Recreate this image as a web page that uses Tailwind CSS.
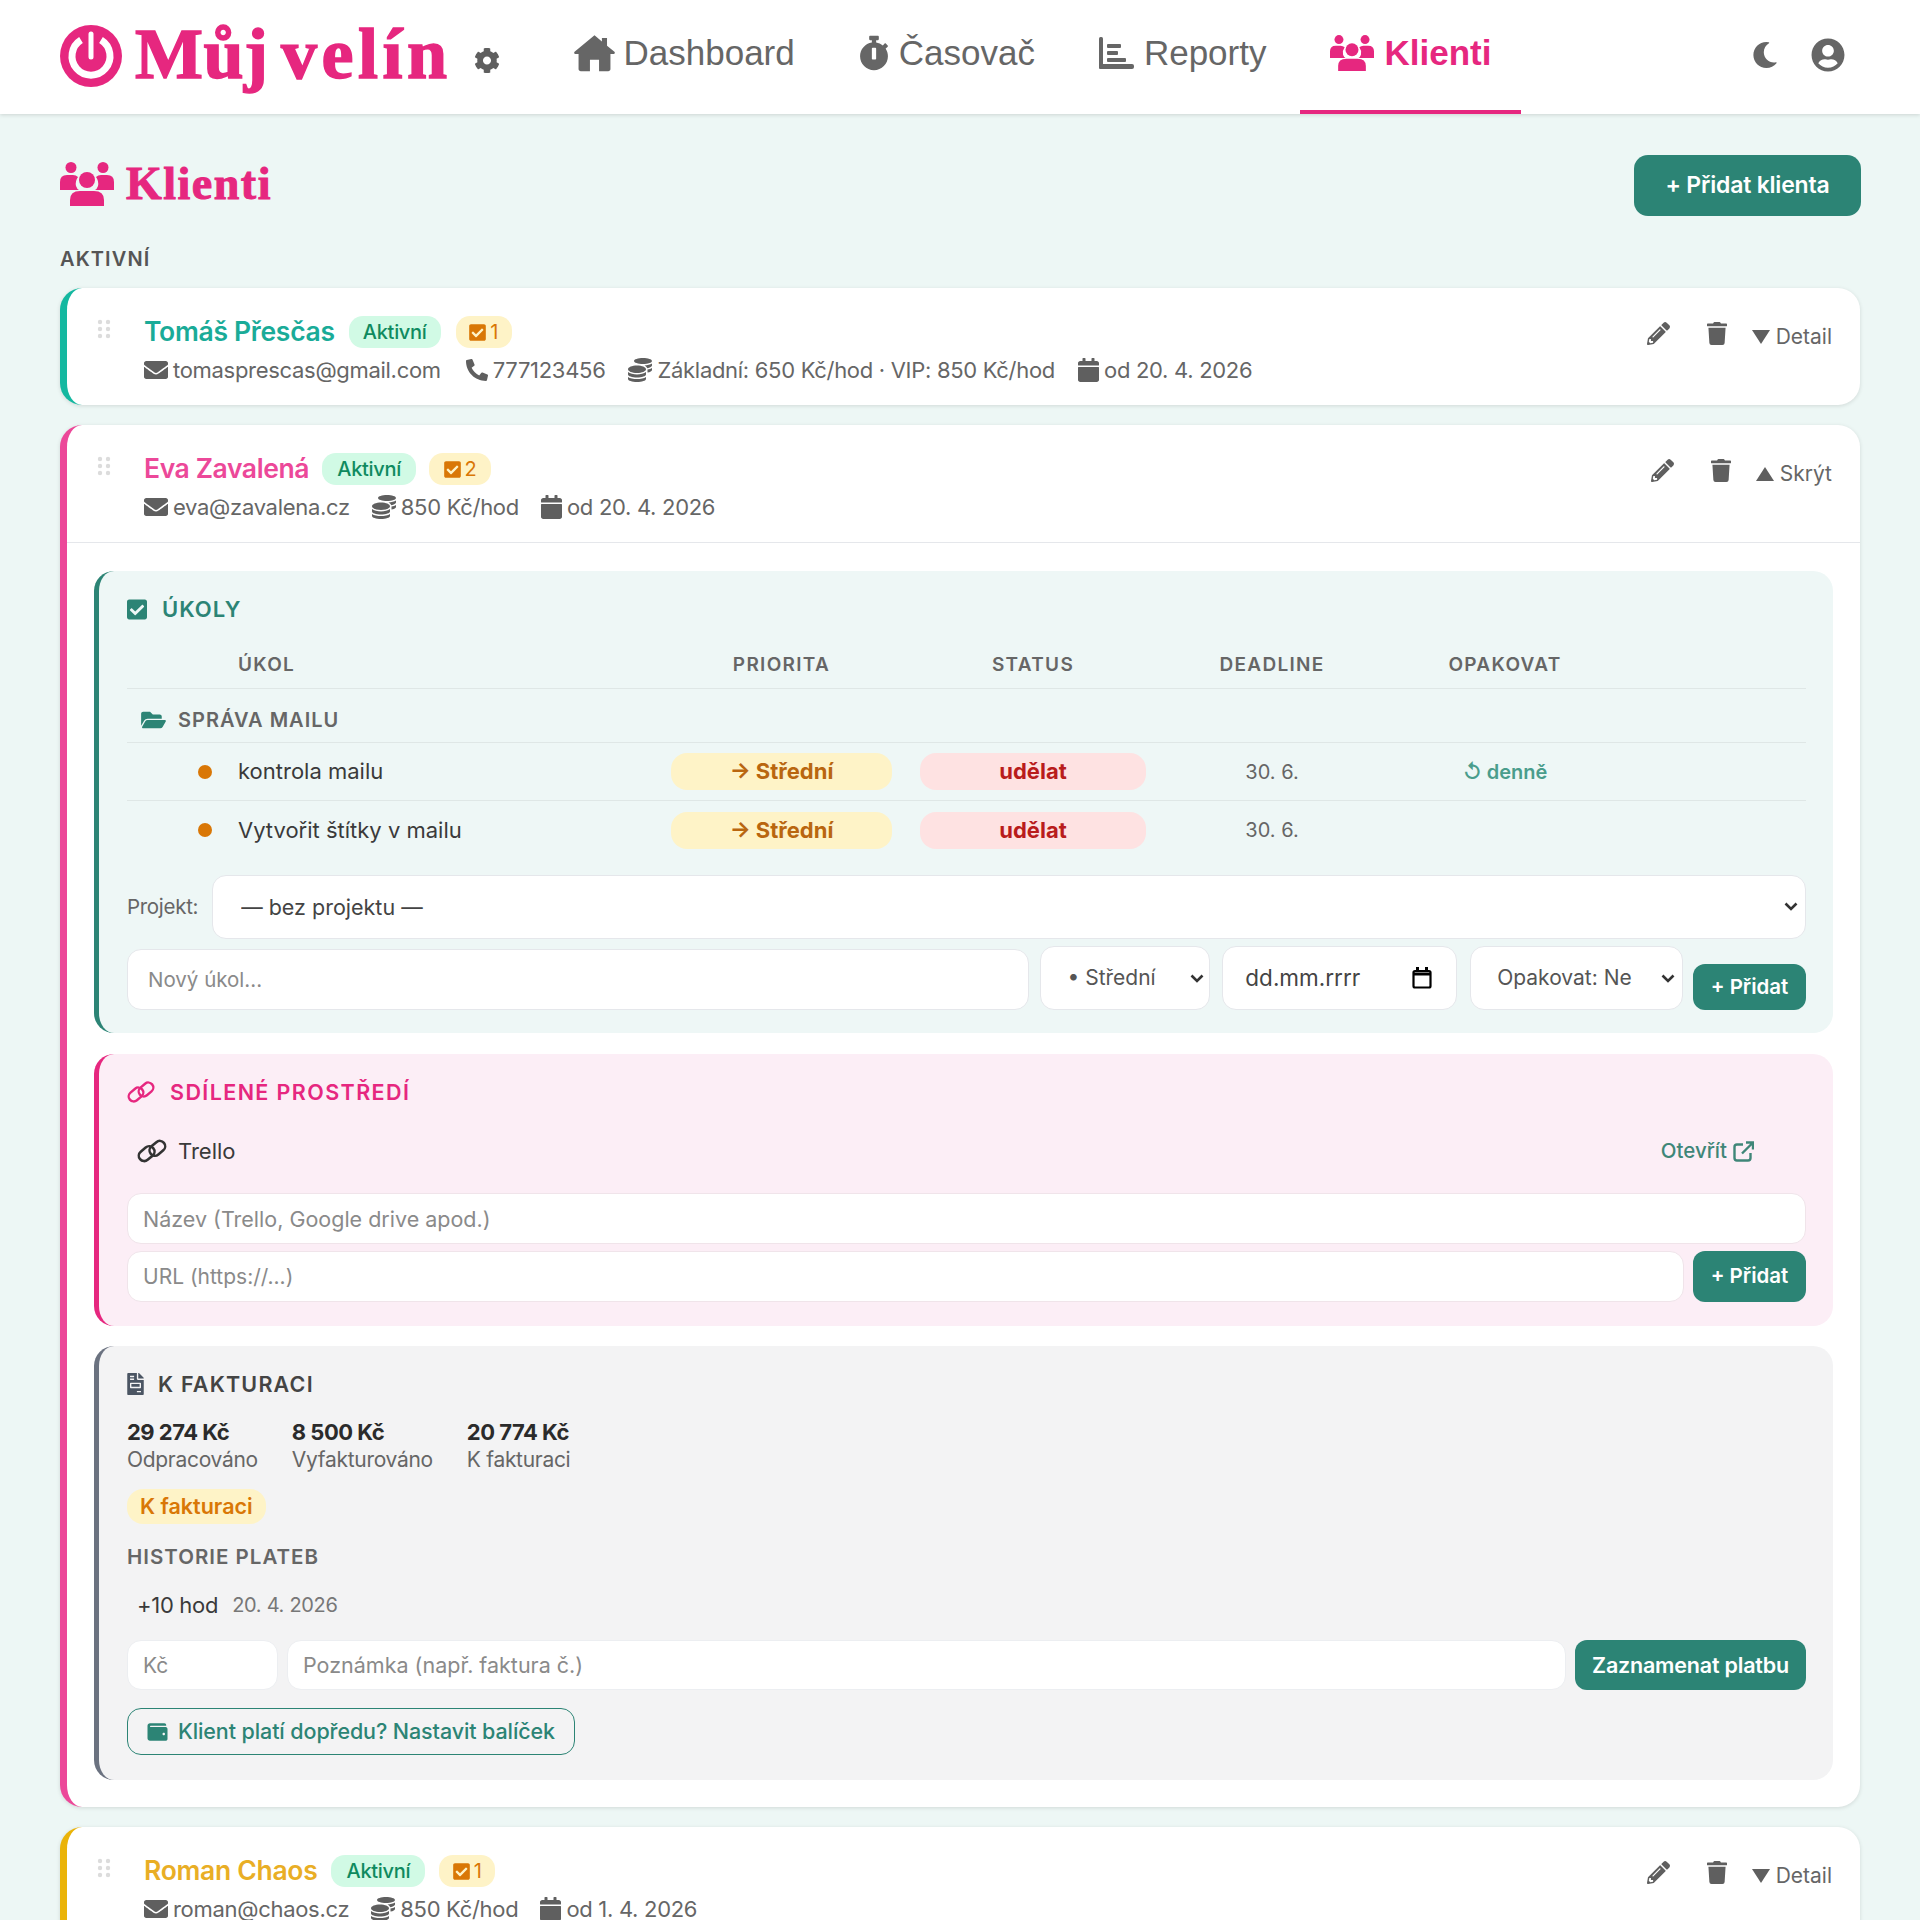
<!DOCTYPE html>
<html lang="cs">
<head>
  <meta charset="UTF-8" />
  <title>Můj velín – Klienti</title>
  <script src="https://cdn.jsdelivr.net/npm/@tailwindcss/browser@4"></script>
</head>
<body class="h-[1920px] overflow-hidden bg-[#edf7f5] text-[#2b2b2b] font-['Inter','Noto_Sans',sans-serif]">
  <!-- icon sprite -->
  <svg class="hidden">
    <symbol id="i-envelope" viewBox="0 0 512 512"><path d="M502.3 190.8c3.9-3.1 9.7-.2 9.7 4.7V400c0 26.5-21.5 48-48 48H48c-26.5 0-48-21.5-48-48V195.6c0-5 5.7-7.8 9.7-4.7 22.4 17.4 52.1 39.5 154.1 113.6 21.1 15.4 56.7 47.8 92.2 47.6 35.7.3 72-32.8 92.3-47.6 102-74.1 131.6-96.3 154-113.7zM256 320c23.2.4 56.6-29.2 73.4-41.4 132.7-96.3 142.8-104.7 173.4-128.7 5.8-4.5 9.2-11.5 9.2-18.9v-19c0-26.5-21.5-48-48-48H48C21.5 64 0 85.5 0 112v19c0 7.4 3.4 14.3 9.2 18.9 30.6 23.9 40.7 32.4 173.4 128.7 16.8 12.2 50.2 41.8 73.4 41.4z"/></symbol>
    <symbol id="i-phone" viewBox="0 0 512 512"><path d="M497.39 361.8l-112-48a24 24 0 0 0-28 6.9l-49.6 60.6A370.66 370.66 0 0 1 130.6 204.11l60.6-49.6a23.94 23.94 0 0 0 6.9-28l-48-112A24.16 24.16 0 0 0 122.6.61l-104 24A24 24 0 0 0 0 48c0 256.5 207.9 464 464 464a24 24 0 0 0 23.4-18.6l24-104a24.29 24.29 0 0 0-14.01-27.6z"/></symbol>
    <symbol id="i-coins" viewBox="0 0 512 512"><path d="M0 405.3V448c0 35.3 86 64 192 64s192-28.7 192-64v-42.7C342.7 434.4 267.2 448 192 448S41.3 434.4 0 405.3zM320 128c106 0 192-28.7 192-64S426 0 320 0 128 28.7 128 64s86 64 192 64zM0 300.4V352c0 35.3 86 64 192 64s192-28.7 192-64v-51.6c-41.3 34-116.9 51.6-192 51.6S41.3 334.4 0 300.4zm416 11c57.3-11.1 96-31.7 96-55.4v-42.7c-23.2 16.4-57.3 27.6-96 34.5v63.6zM192 160C86 160 0 195.8 0 240s86 80 192 80 192-35.8 192-80-86-80-192-80zm219.3 56.3c60-10.8 100.7-32 100.7-56.3v-42.7c-35.5 25.1-96.5 38.6-160.7 41.8 29.5 14.3 51.2 33.5 60 57.2z"/></symbol>
    <symbol id="i-calendar" viewBox="0 0 448 512"><path d="M12 192h424c6.6 0 12 5.4 12 12v260c0 26.5-21.5 48-48 48H48c-26.5 0-48-21.5-48-48V204c0-6.6 5.4-12 12-12zm436-44v-36c0-26.5-21.5-48-48-48h-48V12c0-6.6-5.4-12-12-12h-40c-6.6 0-12 5.4-12 12v52H160V12c0-6.6-5.4-12-12-12h-40c-6.6 0-12 5.4-12 12v52H48C21.5 64 0 85.5 0 112v36c0 6.6 5.4 12 12 12h424c6.6 0 12-5.4 12-12z"/></symbol>
    <symbol id="i-check" viewBox="0 0 448 512"><path d="M400 480H48c-26.51 0-48-21.49-48-48V80c0-26.51 21.49-48 48-48h352c26.51 0 48 21.49 48 48v352c0 26.51-21.49 48-48 48zm-204.686-98.059l184-184c6.248-6.248 6.248-16.379 0-22.627l-22.627-22.627c-6.248-6.248-16.379-6.249-22.628 0L184 302.745l-70.059-70.059c-6.248-6.248-16.379-6.248-22.628 0l-22.627 22.627c-6.248 6.248-6.248 16.379 0 22.627l104 104c6.249 6.25 16.379 6.25 22.628.001z"/></symbol>
    <symbol id="i-trash" viewBox="0 0 448 512"><path d="M432 32H312l-9.4-18.7A24 24 0 0 0 281.1 0H166.8a23.72 23.72 0 0 0-21.4 13.3L136 32H16A16 16 0 0 0 0 48v32a16 16 0 0 0 16 16h416a16 16 0 0 0 16-16V48a16 16 0 0 0-16-16zM53.2 467a48 48 0 0 0 47.9 45h245.8a48 48 0 0 0 47.9-45L416 128H32z"/></symbol>
    <symbol id="i-pencil" viewBox="0 0 512 512"><path d="M497.9 142.1l-46.1 46.1c-4.7 4.7-12.3 4.7-17 0l-111-111c-4.7-4.7-4.7-12.3 0-17l46.1-46.1c18.7-18.7 49.1-18.7 67.9 0l60.1 60.1c18.8 18.7 18.8 49.1 0 67.9zM284.2 99.8L21.6 362.4.4 483.9c-2.9 16.4 11.4 30.6 27.8 27.8l121.5-21.3 262.6-262.6c4.7-4.7 4.7-12.3 0-17l-111-111c-4.8-4.7-12.4-4.7-17.1 0zM124.1 339.9c-5.5-5.5-5.5-14.3 0-19.8l154-154c5.5-5.5 14.3-5.5 19.8 0s5.5 14.3 0 19.8l-154 154c-5.5 5.5-14.3 5.5-19.8 0zM88 424h48v36.3l-64.5 11.3-31.1-31.1L51.7 376H88v48z"/></symbol>
    <symbol id="i-users" viewBox="0 0 54 44"><circle cx="11" cy="5.500" r="5.500"/><circle cx="43" cy="5.500" r="5.500"/><circle cx="27" cy="18" r="8"/><path d="M0 28V20Q0 13 7 13H13Q16 13 18 15Q15 19 16 24Q17 27 19 28Z"/><path d="M54 28V20Q54 13 47 13H41Q38 13 36 15Q39 19 38 24Q37 27 35 28Z"/><path d="M10 44V38Q10 29 20 29H34Q44 29 44 38V44Z"/></symbol>
    <symbol id="i-link" viewBox="0 0 28 24"><rect x="1" y="9.500" width="16" height="10" rx="5" fill="none" stroke="currentColor" stroke-width="2.400" transform="rotate(-40 9 14.500)"/><rect x="11" y="4.500" width="16" height="10" rx="5" fill="none" stroke="currentColor" stroke-width="2.400" transform="rotate(-40 19 9.500)"/></symbol>
    <symbol id="i-chevron" viewBox="0 0 14 9"><path d="M1.500 1.500 7 7l5.500-5.500" fill="none" stroke="currentColor" stroke-width="2.600"/></symbol>
    <symbol id="i-grip" viewBox="0 0 14 20"><circle cx="3" cy="3" r="2.200"/><circle cx="11" cy="3" r="2.200"/><circle cx="3" cy="10" r="2.200"/><circle cx="11" cy="10" r="2.200"/><circle cx="3" cy="17" r="2.200"/><circle cx="11" cy="17" r="2.200"/></symbol>
  </svg>

  <!-- header -->
  <header class="h-[114px] bg-white shadow-[0_1px_4px_rgba(0,0,0,0.14)] px-[60px] flex items-stretch relative">
    <div class="flex items-center gap-[13px] text-[#e6277f]">
      <svg class="w-[62px] h-[62px] mt-[-3px]" viewBox="0 0 62 62">
        <circle cx="31" cy="31" r="31" fill="#e6277f"/>
        <path d="M21 15a19 19 0 1 0 20 0" fill="none" stroke="#fff" stroke-width="7"/>
        <path d="M31 8v24" stroke="#e6277f" stroke-width="13"/>
        <path d="M31 9v23" stroke="#fff" stroke-width="5" stroke-linecap="round"/>
      </svg>
      <span class="font-['Liberation_Serif',serif] font-bold text-[72px] leading-none tracking-[0.500px] [word-spacing:-6px] mt-[-6px] [-webkit-text-stroke:1.500px_#e6277f]">Můj <span class="tracking-[4.500px]">velín</span></span>
    </div>
    <svg class="w-[26px] h-[27px] fill-[#5f5f5f] ml-[22px] mt-[47px]" viewBox="0 0 512 512"><path d="M487.4 315.7l-42.6-24.6c4.3-23.2 4.3-47 0-70.2l42.6-24.6c4.9-2.8 7.1-8.6 5.5-14-11.1-35.6-30-67.8-54.7-94.6-3.8-4.1-10-5.1-14.8-2.3L380.8 110c-17.9-15.4-38.5-27.3-60.8-35.1V25.8c0-5.6-3.9-10.5-9.4-11.7-36.7-8.2-74.3-7.8-109.2 0-5.5 1.2-9.4 6.1-9.4 11.7V75c-22.2 7.9-42.8 19.8-60.8 35.1L88.7 85.5c-4.9-2.8-11-1.9-14.8 2.3-24.7 26.7-43.6 58.9-54.7 94.6-1.7 5.4.6 11.2 5.5 14L67.3 221c-4.3 23.2-4.3 47 0 70.2l-42.6 24.6c-4.9 2.8-7.1 8.6-5.5 14 11.1 35.6 30 67.8 54.7 94.6 3.8 4.1 10 5.1 14.8 2.3l42.6-24.6c17.9 15.4 38.5 27.3 60.8 35.1v49.2c0 5.6 3.9 10.5 9.4 11.7 36.7 8.2 74.3 7.8 109.2 0 5.5-1.2 9.4-6.1 9.4-11.7v-49.2c22.2-7.9 42.8-19.8 60.8-35.1l42.6 24.6c4.9 2.8 11 1.9 14.8-2.3 24.7-26.7 43.6-58.9 54.7-94.6 1.5-5.5-.7-11.3-5.6-14.1zM256 336c-44.1 0-80-35.9-80-80s35.9-80 80-80 80 35.9 80 80-35.9 80-80 80z"/></svg>
    <nav class="flex items-stretch gap-[4px] ml-[44px] font-['Liberation_Sans',sans-serif] text-[35px] text-[#666]">
      <a class="flex items-center gap-[9px] px-[30px] pb-[8px]">
        <svg class="w-[41px] h-[38px] fill-[#666]" viewBox="0 0 576 512"><path d="M288 8l104 86V44h72v110l104 86c12 10 4 30-12 30h-44v210c0 18-14 32-32 32H352V352H224v160H96c-18 0-32-14-32-32V270H20c-16 0-24-20-12-30z"/></svg>
        Dashboard</a>
      <a class="flex items-center gap-[10px] px-[30px] pb-[8px]">
        <svg class="w-[30px] h-[38px] fill-[#666]" viewBox="0 0 448 512"><path d="M432 304c0 114.9-93.1 208-208 208S16 418.9 16 304c0-104 76.3-190.2 176-205.5V64h-28c-6.6 0-12-5.4-12-12V12c0-6.6 5.4-12 12-12h120c6.6 0 12 5.4 12 12v40c0 6.6-5.4 12-12 12h-28v34.5c37.5 5.8 71.7 21.6 99.7 44.6l27.5-27.5c4.7-4.7 12.3-4.7 17 0l28.3 28.3c4.7 4.7 4.7 12.3 0 17l-29.4 29.4-.6.6C419.7 223.3 432 262.2 432 304zm-176 36V188.5c0-6.6-5.4-12-12-12h-40c-6.6 0-12 5.4-12 12V340c0 6.6 5.4 12 12 12h40c6.6 0 12-5.4 12-12z"/></svg>
        Časovač</a>
      <a class="flex items-center gap-[10px] px-[30px] pb-[8px]">
        <svg class="w-[35px] h-[32px] fill-[#666]" viewBox="0 0 35 32"><rect x="0" y="0" width="4" height="32" rx="1.500"/><rect x="0" y="27" width="35" height="5" rx="2"/><rect x="8" y="7" width="14" height="4" rx="1"/><rect x="8" y="14" width="11" height="4" rx="1"/><rect x="8" y="21" width="19" height="4" rx="1"/></svg>
        Reporty</a>
      <a class="flex items-center gap-[10px] px-[30px] pb-[8px] text-[#e6277f] font-bold border-b-[4px] border-[#e6277f] text-[35px] h-[114px] pt-[4px]">
        <svg class="w-[44px] h-[36px] fill-[#e6277f]"><use href="#i-users"/></svg>
        Klienti</a>
    </nav>
    <div class="ml-auto mr-[15px] flex items-center gap-[33px] pb-[4px]">
      <svg class="w-[26px] h-[32px] fill-[#666]" viewBox="0 0 512 512"><path d="M283.211 512c78.962 0 151.079-35.925 198.857-94.792 7.068-8.708-.639-21.43-11.562-19.35-124.203 23.654-238.262-71.576-238.262-196.954 0-72.222 38.662-138.635 101.498-174.394 9.686-5.512 7.25-20.197-3.756-22.23A258.156 258.156 0 0 0 283.211 0c-141.309 0-256 114.511-256 256 0 141.309 114.511 256 256 256z"/></svg>
      <svg class="w-[34px] h-[34px] fill-[#666]" viewBox="0 0 496 512"><path d="M248 8C111 8 0 119 0 256s111 248 248 248 248-111 248-248S385 8 248 8zm0 96c48.6 0 88 39.4 88 88s-39.4 88-88 88-88-39.4-88-88 39.4-88 88-88zm0 344c-58.7 0-111.3-26.6-146.5-68.2 18.8-35.4 55.6-59.8 98.5-59.8 2.4 0 4.8.4 7.1 1.1 13 4.2 26.6 6.9 40.9 6.9 14.3 0 28-2.7 40.9-6.9 2.3-.7 4.7-1.1 7.1-1.1 42.9 0 79.7 24.4 98.5 59.8C359.3 421.4 306.7 448 248 448z"/></svg>
    </div>
  </header>

  <main class="px-[60px] pt-[41px]">
    <div class="flex items-center justify-between">
      <h1 class="flex items-center gap-[12px] mb-[3px] text-[#e6277f] font-['Liberation_Serif',serif] font-bold text-[46px] leading-none tracking-[1.500px] [-webkit-text-stroke:1px_#e6277f]">
        <svg class="w-[54px] h-[44px] fill-[#e6277f]"><use href="#i-users"/></svg>
        Klienti
      </h1>
      <button class="h-[61px] w-[227px] mr-[-1px] rounded-[14px] bg-[#2c8475] text-white text-[23px] font-semibold tracking-[-0.2px]">+ Přidat klienta</button>
    </div>
    <div class="mt-[31px] text-[20px] leading-[24px] font-semibold tracking-[1.100px] text-[#555]">AKTIVNÍ</div>

    <!-- client 1 -->
    <section class="mt-[17px] h-[117px] bg-white rounded-[22px] border-l-[7px] border-[#14b8a0] shadow-[0_1px_4px_rgba(0,0,0,0.12)] flex pl-[30px] pr-[28px] pt-[28px]">
      <svg class="w-[14px] h-[20px] fill-[#dcdcdc] mt-[3px]"><use href="#i-grip"/></svg>
      <div class="ml-[33px]">
        <div class="flex items-center h-[32px]">
          <span class="text-[26.500px] font-semibold tracking-[-0.3px] text-[#1aab98]">Tomáš Přesčas</span>
          <span class="ml-[14px] h-[32px] w-[92px] rounded-[14px] bg-[#d1fae5] text-[#0f8a5f] text-[20px] font-medium flex items-center justify-center tracking-[-0.3px]">Aktivní</span>
          <span class="ml-[15px] h-[32px] w-[56px] rounded-[14px] bg-[#fef3c7] text-[#d97706] text-[20px] flex items-center justify-center gap-[4px]"><svg class="w-[17px] h-[19px] fill-[#d97706]"><use href="#i-check"/></svg>1</span>
        </div>
        <div class="flex items-center mt-[8px] text-[22px] tracking-[-0.3px] text-[#666] leading-[28px]">
          <svg class="w-[24px] h-[24px] fill-[#5f5f5f] mr-[5px]"><use href="#i-envelope"/></svg>tomasprescas@gmail.com
          <svg class="w-[22px] h-[22px] fill-[#5f5f5f] ml-[25px] mr-[5px]"><use href="#i-phone"/></svg>777123456
          <svg class="w-[24px] h-[24px] fill-[#5f5f5f] ml-[23px] mr-[5px]"><use href="#i-coins"/></svg>Základní: 650 Kč/hod · VIP: 850 Kč/hod
          <svg class="w-[21px] h-[24px] fill-[#5f5f5f] ml-[23px] mr-[5px]"><use href="#i-calendar"/></svg>od 20. 4. 2026
        </div>
      </div>
      <div class="ml-auto flex items-start gap-[37px] text-[#666] text-[21px]">
        <svg class="w-[23px] h-[23px] fill-[#5f5f5f] mt-[6px]"><use href="#i-pencil"/></svg>
        <svg class="w-[20px] h-[23px] fill-[#5f5f5f] mt-[6px]"><use href="#i-trash"/></svg>
        <span class="flex items-center gap-[6px] mt-[7px] ml-[-12px] leading-[28px]"><svg class="w-[18px] h-[14px] fill-[#5f5f5f]" viewBox="0 0 18 14"><path d="M0 0h18l-9 14z"/></svg>Detail</span>
      </div>
    </section>

    <!-- client 2 -->
    <section class="mt-[20px] h-[1382px] bg-white rounded-[22px] border-l-[7px] border-[#ec4899] shadow-[0_1px_4px_rgba(0,0,0,0.12)]">
      <div class="h-[118px] border-b border-[#e5e7eb] flex pl-[30px] pr-[28px] pt-[28px]">
        <svg class="w-[14px] h-[20px] fill-[#dcdcdc] mt-[3px]"><use href="#i-grip"/></svg>
        <div class="ml-[33px]">
          <div class="flex items-center h-[32px]">
            <span class="text-[26.500px] font-semibold tracking-[-0.4px] text-[#ec4899]">Eva Zavalená</span>
            <span class="ml-[13px] h-[32px] w-[94px] rounded-[14px] bg-[#d1fae5] text-[#0f8a5f] text-[20px] font-medium flex items-center justify-center tracking-[-0.3px]">Aktivní</span>
            <span class="ml-[13px] h-[32px] w-[62px] rounded-[14px] bg-[#fef3c7] text-[#d97706] text-[20px] flex items-center justify-center gap-[4px]"><svg class="w-[17px] h-[19px] fill-[#d97706]"><use href="#i-check"/></svg>2</span>
          </div>
          <div class="flex items-center mt-[8px] text-[22px] tracking-[-0.3px] text-[#666] leading-[28px]">
            <svg class="w-[24px] h-[24px] fill-[#5f5f5f] mr-[5px]"><use href="#i-envelope"/></svg>eva@zavalena.cz
            <svg class="w-[24px] h-[24px] fill-[#5f5f5f] ml-[22px] mr-[5px]"><use href="#i-coins"/></svg>850 Kč/hod
            <svg class="w-[21px] h-[24px] fill-[#5f5f5f] ml-[22px] mr-[5px]"><use href="#i-calendar"/></svg>od 20. 4. 2026
          </div>
        </div>
        <div class="ml-auto flex items-start gap-[37px] text-[#666] text-[21px]">
          <svg class="w-[23px] h-[23px] fill-[#5f5f5f] mt-[6px]"><use href="#i-pencil"/></svg>
          <svg class="w-[20px] h-[23px] fill-[#5f5f5f] mt-[6px]"><use href="#i-trash"/></svg>
          <span class="flex items-center gap-[6px] mt-[7px] ml-[-12px] leading-[28px]"><svg class="w-[18px] h-[14px] fill-[#5f5f5f]" viewBox="0 0 18 14"><path d="M0 14h18L9 0z"/></svg>Skrýt</span>
        </div>
      </div>

      <div class="px-[27px] pt-[28px] flex flex-col gap-[20px]">
        <!-- tasks -->
        <div class="h-[462px] rounded-[20px] bg-[#eef7f6] border-l-[5px] border-[#2c8475] pl-[28px] pr-[27px] pt-[26px]">
          <div class="flex items-center gap-[15px] text-[#2c8475] text-[22px] font-semibold tracking-[1px] leading-[24px]">
            <svg class="w-[20px] h-[23px] fill-[#2c8475]"><use href="#i-check"/></svg>ÚKOLY
          </div>
          <div class="mt-[32px] h-[36px] grid grid-cols-[111px_419px_249px_254px_224px_242px_180px] border-b border-[#dfe7e6] text-[19px] font-semibold tracking-[1.300px] text-[#666] leading-[24px]">
            <span></span><span>ÚKOL</span><span class="text-center">PRIORITA</span><span class="text-center">STATUS</span><span class="text-center">DEADLINE</span><span class="text-center">OPAKOVAT</span><span></span>
          </div>
          <div class="h-[54px] border-b border-[#dfe7e6] flex items-center pt-[8px] pl-[14px] gap-[12px] text-[20px] font-semibold tracking-[1px] text-[#666]">
            <svg class="w-[25px] h-[22px] fill-[#2c8475]" viewBox="0 0 576 512"><path d="M572.694 292.093L500.27 416.248A63.997 63.997 0 0 1 444.989 448H45.025c-18.523 0-30.064-20.093-20.731-36.093l72.424-124.155A64 64 0 0 1 152 256h399.964c18.523 0 30.064 20.093 20.73 36.093zM152 224h328v-48c0-26.51-21.49-48-48-48H272l-64-64H48C21.49 64 0 85.49 0 112v278.046l69.077-118.418C86.214 242.25 117.989 224 152 224z"/></svg>
            SPRÁVA MAILU
          </div>
          <div class="h-[58px] grid grid-cols-[111px_419px_249px_254px_224px_242px_180px] items-center border-b border-[#dfe7e6] text-[22px]">
            <span class="justify-self-end mr-[26px] w-[14px] h-[14px] rounded-full bg-[#d97706]"></span>
            <span class="text-[#3a3a3a]">kontrola mailu</span>
            <span class="mx-[14px] h-[37px] rounded-[16px] bg-[#fef3c7] text-[#b9660f] text-[22px] font-bold flex items-center justify-center">→ Střední</span>
            <span class="mx-[14px] h-[37px] rounded-[16px] bg-[#fee2e2] text-[#b91c1c] text-[22px] font-bold flex items-center justify-center">udělat</span>
            <span class="text-center text-[20px] text-[#666]">30. 6.</span>
            <span class="text-center text-[20px] font-semibold text-[#4a9d8c]">↺ denně</span>
            <span></span>
          </div>
          <div class="h-[58px] grid grid-cols-[111px_419px_249px_254px_224px_242px_180px] items-center text-[22px]">
            <span class="justify-self-end mr-[26px] w-[14px] h-[14px] rounded-full bg-[#d97706]"></span>
            <span class="text-[#3a3a3a]">Vytvořit štítky v mailu</span>
            <span class="mx-[14px] h-[37px] rounded-[16px] bg-[#fef3c7] text-[#b9660f] text-[22px] font-bold flex items-center justify-center">→ Střední</span>
            <span class="mx-[14px] h-[37px] rounded-[16px] bg-[#fee2e2] text-[#b91c1c] text-[22px] font-bold flex items-center justify-center">udělat</span>
            <span class="text-center text-[20px] text-[#666]">30. 6.</span>
            <span></span><span></span>
          </div>
          <div class="mt-[16px] flex items-center gap-[14px]">
            <label class="text-[20.500px] text-[#666] tracking-[-0.3px]">Projekt:</label>
            <div class="relative flex-1 h-[64px]">
              <select class="appearance-none w-full h-full rounded-[14px] bg-white border border-[#e5e7eb] pl-[28px] pr-[8px] text-[21.500px] text-[#444]"><option>— bez projektu —</option></select>
              <svg class="absolute right-[8px] top-[27px] w-[14px] h-[9px] text-[#333]"><use href="#i-chevron"/></svg>
            </div>
          </div>
          <div class="mt-[7px] flex items-end">
            <input class="w-[903px] h-[61px] rounded-[14px] bg-white border border-[#e5e7eb] px-[20px] text-[20.500px] placeholder:text-[#8a8a8a]" placeholder="Nový úkol..." />
            <div class="relative ml-[11px] w-[170px] h-[64px]">
              <select class="appearance-none w-full h-full rounded-[14px] bg-white border border-[#e5e7eb] pl-[26px] text-[21px] text-[#555]"><option>• Střední</option></select>
              <svg class="absolute right-[6px] top-[28px] w-[14px] h-[9px] text-[#333]"><use href="#i-chevron"/></svg>
            </div>
            <div class="ml-[12px] w-[235px] h-[64px] rounded-[14px] bg-white border border-[#e5e7eb] pl-[22px] pr-[24px] flex items-center justify-between text-[22.500px] text-[#444]">dd.mm.rrrr
              <svg class="w-[20px] h-[22px] fill-none stroke-black stroke-[2.200]" viewBox="0 0 20 22"><rect x="1.500" y="4" width="17" height="16.500" rx="1.500"/><path d="M1 7h18M5.500 0v4M14.500 0v4" stroke-width="3"/></svg>
            </div>
            <div class="relative ml-[13px] w-[213px] h-[64px]">
              <select class="appearance-none w-full h-full rounded-[14px] bg-white border border-[#e5e7eb] pl-[26px] text-[21px] text-[#555]"><option>Opakovat: Ne</option></select>
              <svg class="absolute right-[8px] top-[28px] w-[14px] h-[9px] text-[#333]"><use href="#i-chevron"/></svg>
            </div>
            <button class="ml-[10px] w-[113px] h-[46px] rounded-[12px] bg-[#2c8475] text-white text-[20.500px] font-semibold">+ Přidat</button>
          </div>
        </div>

        <!-- shared environment -->
        <div class="h-[272px] mt-[1px] rounded-[20px] bg-[#fceef6] border-l-[5px] border-[#e6277f] pl-[28px] pr-[27px] pt-[26px]">
          <div class="flex items-center gap-[15px] text-[#e6277f] text-[21.500px] font-semibold tracking-[1.400px] leading-[24px]">
            <svg class="w-[28px] h-[24px]"><use href="#i-link"/></svg>SDÍLENÉ PROSTŘEDÍ
          </div>
          <div class="mt-[29px] h-[36px] flex items-center pl-[10px] pr-[52px] text-[22px] text-[#3a3a3a]">
            <svg class="w-[30px] h-[26px] text-[#333] mr-[11px]"><use href="#i-link"/></svg>Trello
            <span class="ml-auto flex items-center gap-[6px] text-[20.500px] text-[#3f8678] font-medium">Otevřít
              <svg class="w-[21px] h-[21px] fill-none stroke-[#3f8678] stroke-[2.400]" viewBox="0 0 21 21"><path d="M10 3.500H4a2.500 2.500 0 0 0-2.500 2.500v11A2.500 2.500 0 0 0 4 19.500h11a2.500 2.500 0 0 0 2.500-2.500v-5M9 12.500 19 2.500M13 1.500h7v7"/></svg></span>
          </div>
          <input class="mt-[24px] block w-full h-[51px] rounded-[14px] bg-white border border-[#f0e4ea] px-[15px] text-[21.500px] placeholder:text-[#8a8a8a]" placeholder="Název (Trello, Google drive apod.)" />
          <div class="mt-[7px] flex gap-[9px]">
            <input class="flex-1 h-[51px] rounded-[14px] bg-white border border-[#f0e4ea] px-[15px] text-[21px] placeholder:text-[#8a8a8a]" placeholder="URL (https://...)" />
            <button class="w-[113px] h-[51px] rounded-[12px] bg-[#2c8475] text-white text-[20.500px] font-semibold">+ Přidat</button>
          </div>
        </div>

        <!-- invoicing -->
        <div class="h-[434px] rounded-[20px] bg-[#f3f3f4] border-l-[5px] border-[#6b7280] pl-[28px] pr-[27px] pt-[26px]">
          <div class="flex items-center gap-[14px] text-[#444] text-[21.500px] font-semibold tracking-[1.200px] leading-[24px]">
            <svg class="w-[17px] h-[22px] fill-[#4b5563]" viewBox="0 0 384 512"><path d="M288 256H96v64h192v-64zm89-151L279.1 7c-4.500-4.500-10.600-7-17-7H256v128h128v-6.100c0-6.300-2.500-12.400-7-16.900zm-153 31V0H24C10.700 0 0 10.700 0 24v464c0 13.300 10.700 24 24 24h336c13.300 0 24-10.700 24-24V160H248c-13.200 0-24-10.800-24-24zM64 72c0-4.420 3.580-8 8-8h80c4.420 0 8 3.580 8 8v16c0 4.420-3.580 8-8 8H72c-4.420 0-8-3.580-8-8V72zm0 64c0-4.420 3.580-8 8-8h80c4.420 0 8 3.580 8 8v16c0 4.420-3.580 8-8 8H72c-4.420 0-8-3.580-8-8v-16zm256 304c0 4.420-3.580 8-8 8h-80c-4.420 0-8-3.580-8-8v-16c0-4.420 3.580-8 8-8h80c4.420 0 8 3.580 8 8v16zm0-200v96c0 8.840-7.160 16-16 16H80c-8.840 0-16-7.160-16-16v-96c0-8.840 7.160-16 16-16h224c8.840 0 16 7.160 16 16z"/></svg>
            K FAKTURACI
          </div>
          <div class="mt-[22px] flex gap-[34px]">
            <div><div class="text-[22px] font-bold leading-[28px] tracking-[-0.5px] text-[#2b2b2b]">29 274 Kč</div><div class="text-[21px] leading-[28px] text-[#666] tracking-[-0.3px]">Odpracováno</div></div>
            <div><div class="text-[22px] font-bold leading-[28px] tracking-[-0.5px] text-[#2b2b2b]">8 500 Kč</div><div class="text-[21px] leading-[28px] text-[#666] tracking-[-0.3px]">Vyfakturováno</div></div>
            <div><div class="text-[22px] font-bold leading-[28px] tracking-[-0.5px] text-[#2b2b2b]">20 774 Kč</div><div class="text-[21px] leading-[28px] text-[#666] tracking-[-0.3px]">K fakturaci</div></div>
          </div>
          <span class="mt-[15px] inline-flex items-center h-[35px] px-[13px] rounded-[16px] bg-[#fef3c7] text-[#d97706] text-[21.500px] font-semibold">K fakturaci</span>
          <div class="mt-[21px] text-[20.500px] font-semibold tracking-[1px] text-[#666] leading-[24px]">HISTORIE PLATEB</div>
          <div class="mt-[22px] pl-[10px] flex items-center gap-[14px] text-[22px] leading-[28px] tracking-[-0.3px] text-[#3a3a3a]">+10 hod <span class="text-[20px] text-[#777]">20. 4. 2026</span></div>
          <div class="mt-[21px] flex gap-[9px]">
            <input class="w-[151px] h-[50px] rounded-[14px] bg-white border border-[#eceef1] px-[15px] text-[21px] placeholder:text-[#8a8a8a]" placeholder="Kč" />
            <input class="flex-1 h-[50px] rounded-[14px] bg-white border border-[#eceef1] px-[15px] text-[21.500px] placeholder:text-[#8a8a8a]" placeholder="Poznámka (např. faktura č.)" />
            <button class="w-[231px] h-[50px] rounded-[12px] bg-[#2c8475] text-white text-[21.500px] font-semibold tracking-[-0.2px]">Zaznamenat platbu</button>
          </div>
          <button class="mt-[18px] h-[47px] w-[448px] rounded-[14px] border-[1.500px] border-[#2c8475] text-[#2c8475] text-[21.500px] font-medium flex items-center justify-center gap-[10px] tracking-[-0.1px]">
            <svg class="w-[21px] h-[20px] fill-[#2c8475]" viewBox="0 0 512 512"><path d="M461.2 128H80c-8.840 0-16-7.160-16-16s7.160-16 16-16h384c8.840 0 16-7.160 16-16 0-26.510-21.490-48-48-48H64C28.650 32 0 60.650 0 96v320c0 35.350 28.650 64 64 64h397.200c28.020 0 50.800-21.530 50.800-48V176c0-26.470-22.780-48-50.800-48zM416 336c-17.670 0-32-14.330-32-32s14.330-32 32-32 32 14.330 32 32-14.330 32-32 32z"/></svg>
            Klient platí dopředu? Nastavit balíček
          </button>
        </div>
      </div>
    </section>

    <!-- client 3 -->
    <section class="mt-[20px] h-[117px] bg-white rounded-[22px] border-l-[7px] border-[#eab308] shadow-[0_1px_4px_rgba(0,0,0,0.12)] flex pl-[30px] pr-[28px] pt-[28px]">
      <svg class="w-[14px] h-[20px] fill-[#dcdcdc] mt-[3px]"><use href="#i-grip"/></svg>
      <div class="ml-[33px]">
        <div class="flex items-center h-[32px]">
          <span class="text-[26.500px] font-semibold tracking-[-0.3px] text-[#e9ae25]">Roman Chaos</span>
          <span class="ml-[14px] h-[32px] w-[94px] rounded-[14px] bg-[#d1fae5] text-[#0f8a5f] text-[20px] font-medium flex items-center justify-center tracking-[-0.3px]">Aktivní</span>
          <span class="ml-[14px] h-[32px] w-[56px] rounded-[14px] bg-[#fef3c7] text-[#d97706] text-[20px] flex items-center justify-center gap-[4px]"><svg class="w-[17px] h-[19px] fill-[#d97706]"><use href="#i-check"/></svg>1</span>
        </div>
        <div class="flex items-center mt-[8px] text-[22px] tracking-[-0.3px] text-[#666] leading-[28px]">
          <svg class="w-[24px] h-[24px] fill-[#5f5f5f] mr-[5px]"><use href="#i-envelope"/></svg>roman@chaos.cz
          <svg class="w-[24px] h-[24px] fill-[#5f5f5f] ml-[22px] mr-[5px]"><use href="#i-coins"/></svg>850 Kč/hod
          <svg class="w-[21px] h-[24px] fill-[#5f5f5f] ml-[22px] mr-[5px]"><use href="#i-calendar"/></svg>od 1. 4. 2026
        </div>
      </div>
      <div class="ml-auto flex items-start gap-[37px] text-[#666] text-[21px]">
        <svg class="w-[23px] h-[23px] fill-[#5f5f5f] mt-[6px]"><use href="#i-pencil"/></svg>
        <svg class="w-[20px] h-[23px] fill-[#5f5f5f] mt-[6px]"><use href="#i-trash"/></svg>
        <span class="flex items-center gap-[6px] mt-[7px] ml-[-12px] leading-[28px]"><svg class="w-[18px] h-[14px] fill-[#5f5f5f]" viewBox="0 0 18 14"><path d="M0 0h18l-9 14z"/></svg>Detail</span>
      </div>
    </section>
  </main>
</body>
</html>
